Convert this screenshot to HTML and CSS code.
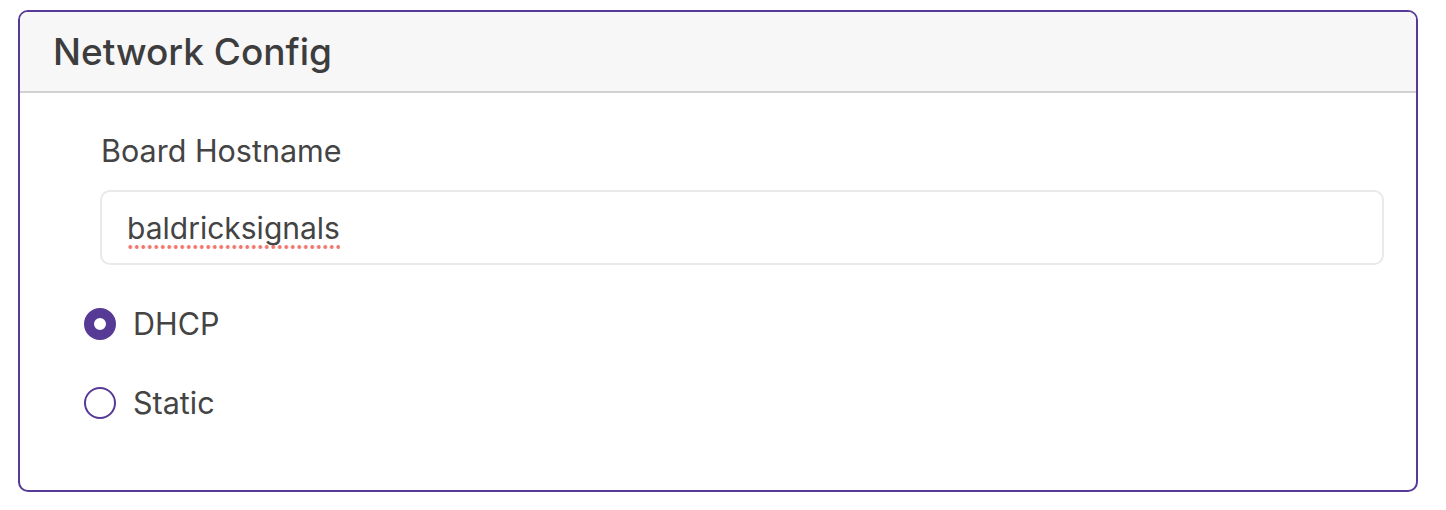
FILE: index.html
```html
<!DOCTYPE html>
<html>
<head>
<meta charset="utf-8">
<link rel="stylesheet" href="styles.css">
</head>
<body>
<div class="card">
  <div class="card-header">
    <h2 class="card-title">Network Config</h2>
  </div>
  <div class="card-body">
    <div class="form-group">
      <label class="field-label">Board Hostname</label>
      <div class="text-input"><span class="misspelled">baldricksignals</span></div>
    </div>
    <div class="radio-list">
      <div class="radio-row">
        <span class="radio checked"></span>
        <span class="radio-label">DHCP</span>
      </div>
      <div class="radio-row">
        <span class="radio"></span>
        <span class="radio-label">Static</span>
      </div>
    </div>
  </div>
</div>
</body>
</html>
```

FILE: styles.css
```css
html, body {
  margin: 0;
  padding: 0;
  background: #ffffff;
}
body {
  font-family: Inter, "Liberation Sans", sans-serif;
  color: #444444;
  padding: 10px 28px 0 18px;
}
.card {
  border: 2px solid #563a95;
  border-radius: 10px;
  overflow: hidden;
  box-sizing: border-box;
  height: 482px;
  display: flex;
  flex-direction: column;
}
.card-header {
  background: #f7f7f7;
  border-bottom: 2px solid #d2d2d2;
  height: 79px;
  display: flex;
  align-items: center;
  padding-left: 33px;
}
.card-title {
  margin: 0;
  font-size: 37px;
  line-height: 44px;
  font-weight: 500;
  color: #3d3d3d;
}
.card-body {
  padding: 0 32px 0 64px;
}
.form-group {
  padding-left: 16px;
  display: flex;
  flex-direction: column;
}
.field-label {
  font-size: 30.5px;
  line-height: 36px;
  margin-top: 40px;
  padding-left: 1px;
  color: #444444;
}
.text-input {
  margin-top: 21px;
  height: 75px;
  box-sizing: border-box;
  border: 2px solid #e9e9e9;
  border-radius: 10px;
  display: flex;
  align-items: center;
  padding-left: 25px;
  font-size: 30px;
  color: #444444;
}
.misspelled {
  padding-bottom: 3px;
  margin-bottom: -3px;
  background-image: radial-gradient(circle, #f2756c 1.6px, rgba(242, 117, 108, 0) 2.2px);
  background-size: 6.5px 4px;
  background-repeat: repeat-x;
  background-position: 0 100%;
}
.radio-list {
  display: flex;
  flex-direction: column;
  margin-top: 43px;
  gap: 47px;
}
.radio-row {
  display: flex;
  align-items: center;
  gap: 17px;
  height: 32px;
}
.radio {
  width: 32px;
  height: 32px;
  box-sizing: border-box;
  border: 2px solid #563a95;
  border-radius: 50%;
  background: #ffffff;
  flex: none;
}
.radio.checked {
  border: 10.5px solid #563a95;
}
.radio-label {
  font-size: 30.5px;
  line-height: 36px;
  color: #444444;
}
```
